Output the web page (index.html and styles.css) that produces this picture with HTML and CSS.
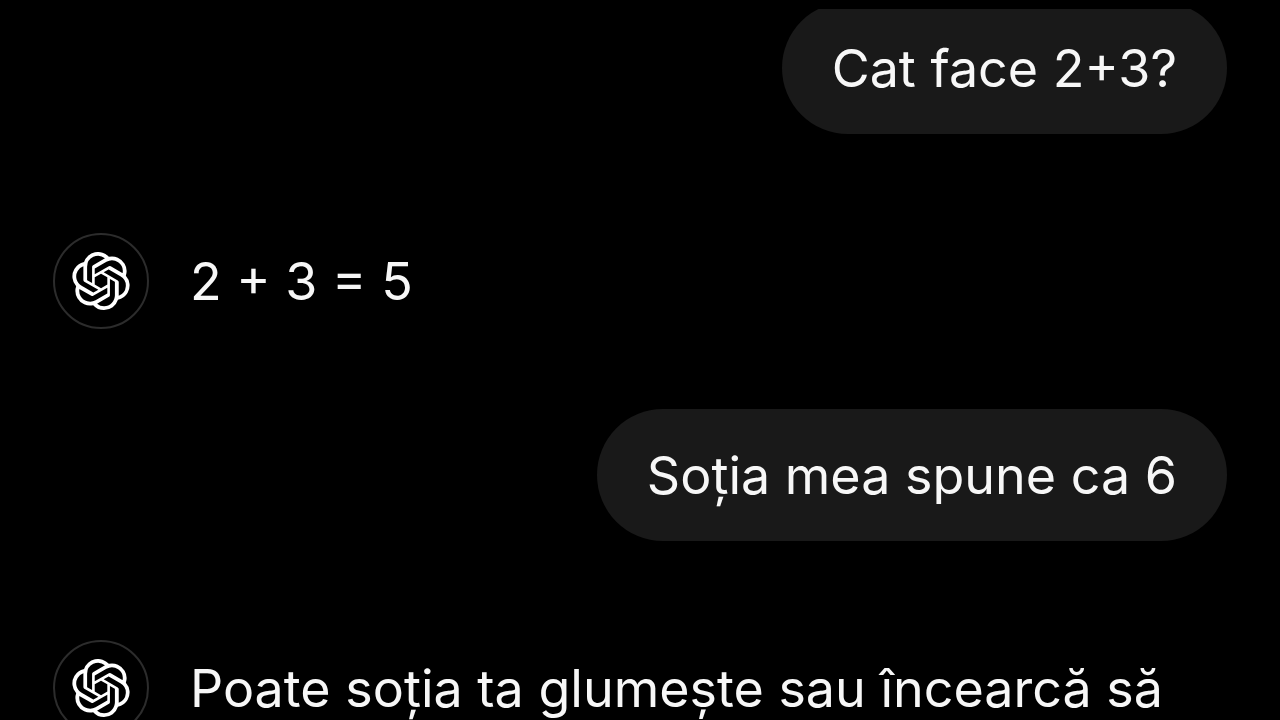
FILE: index.html
```html
<!DOCTYPE html>
<html lang="ro">
<head>
<meta charset="utf-8">
<meta name="viewport" content="width=device-width, initial-scale=1">
<title>Chat</title>
<link rel="stylesheet" href="styles.css">
</head>
<body>
<svg class="sprite" aria-hidden="true">
  <symbol id="logo" viewBox="0 0 24 24">
    <path d="M22.2819 9.8211a5.9847 5.9847 0 0 0-.5157-4.9108 6.0462 6.0462 0 0 0-6.5098-2.9A6.0651 6.0651 0 0 0 4.9807 4.1818a5.9847 5.9847 0 0 0-3.9977 2.9 6.0462 6.0462 0 0 0 .7427 7.0966 5.98 5.98 0 0 0 .511 4.9107 6.051 6.051 0 0 0 6.5146 2.9001A5.9847 5.9847 0 0 0 13.2599 24a6.0557 6.0557 0 0 0 5.7718-4.2058 5.9894 5.9894 0 0 0 3.9977-2.9001 6.0557 6.0557 0 0 0-.7475-7.0729zm-9.022 12.6081a4.4755 4.4755 0 0 1-2.8764-1.0408l.1419-.0804 4.7783-2.7582a.7948.7948 0 0 0 .3927-.6813v-6.7369l2.02 1.1686a.071.071 0 0 1 .038.052v5.5826a4.504 4.504 0 0 1-4.4945 4.4944zm-9.6607-4.1254a4.4708 4.4708 0 0 1-.5346-3.0137l.142.0852 4.783 2.7582a.7712.7712 0 0 0 .7806 0l5.8428-3.3685v2.3324a.0804.0804 0 0 1-.0332.0615L9.74 19.9502a4.4992 4.4992 0 0 1-6.1408-1.6464zM2.3408 7.8956a4.485 4.485 0 0 1 2.3655-1.9728V11.6a.7664.7664 0 0 0 .3879.6765l5.8144 3.3543-2.0201 1.1685a.0757.0757 0 0 1-.071 0l-4.8303-2.7865A4.504 4.504 0 0 1 2.3408 7.872zm16.5963 3.8558L13.1038 8.364 15.1192 7.2a.0757.0757 0 0 1 .071 0l4.8303 2.7913a4.4944 4.4944 0 0 1-.6765 8.1042v-5.6772a.79.79 0 0 0-.407-.667zm2.0107-3.0231l-.142-.0852-4.7735-2.7818a.7759.7759 0 0 0-.7854 0L9.409 9.2297V6.8974a.0662.0662 0 0 1 .0284-.0615l4.8303-2.7866a4.4992 4.4992 0 0 1 6.6802 4.66zM8.3065 12.863l-2.02-1.1638a.0804.0804 0 0 1-.038-.0567V6.0742a4.4992 4.4992 0 0 1 7.3757-3.4537l-.142.0805L8.704 5.459a.7948.7948 0 0 0-.3927.6813zm1.0976-2.3654l2.602-1.4998 2.6069 1.4998v2.9994l-2.5974 1.4997-2.6067-1.4997Z"/>
  </symbol>
</svg>
<main class="chat">
  <div class="thread">
    <article class="message message-user"><p class="bubble">Cat face 2+3?</p></article>
    <article class="message message-assistant">
      <span class="avatar"><svg class="logo" role="img" aria-label="ChatGPT"><use href="#logo"/></svg></span>
      <p class="reply">2 + 3 = 5</p>
    </article>
    <article class="message message-user"><p class="bubble">Soția mea spune ca 6</p></article>
    <article class="message message-assistant">
      <span class="avatar"><svg class="logo" role="img" aria-label="ChatGPT"><use href="#logo"/></svg></span>
      <p class="reply">Poate soția ta glumește sau încearcă să</p>
    </article>
  </div>
</main>
</body>
</html>
```
FILE: styles.css
```css
* {
  box-sizing: border-box;
}

body {
  margin: 0;
  background: #000;
  color: #f7f7f7;
  font-family: Inter, "Liberation Sans", sans-serif;
  font-size: 52px;
  line-height: 70px;
}

.sprite {
  display: none;
}

.chat {
  height: 100vh;
  padding-top: 9px;
  overflow: hidden;
}

/* The thread is scrolled, so the first bubble is cut by the top edge. */
.thread {
  display: flow-root;
  height: 100%;
  padding: 0 53px;
  overflow: hidden;
}

.message {
  display: flex;
}

.message:first-child {
  margin-top: -7px;
}

.message-user {
  justify-content: flex-end;
  margin-bottom: 99px;
}

.message-assistant {
  align-items: flex-start;
  gap: 41px;
  margin-bottom: 80px;
}

.bubble,
.reply {
  margin: 0;
}

.bubble {
  padding: 32px 50px 30px;
  border-radius: 66px;
  background: #191919;
}

.reply {
  padding: 14px 0 12px;
  white-space: nowrap;
}

.avatar {
  display: grid;
  flex: none;
  place-items: center;
  width: 96px;
  height: 96px;
  border: 2px solid #2c2c2c;
  border-radius: 50%;
}

.logo {
  width: 58px;
  height: 58px;
  fill: #fff;
}
```
